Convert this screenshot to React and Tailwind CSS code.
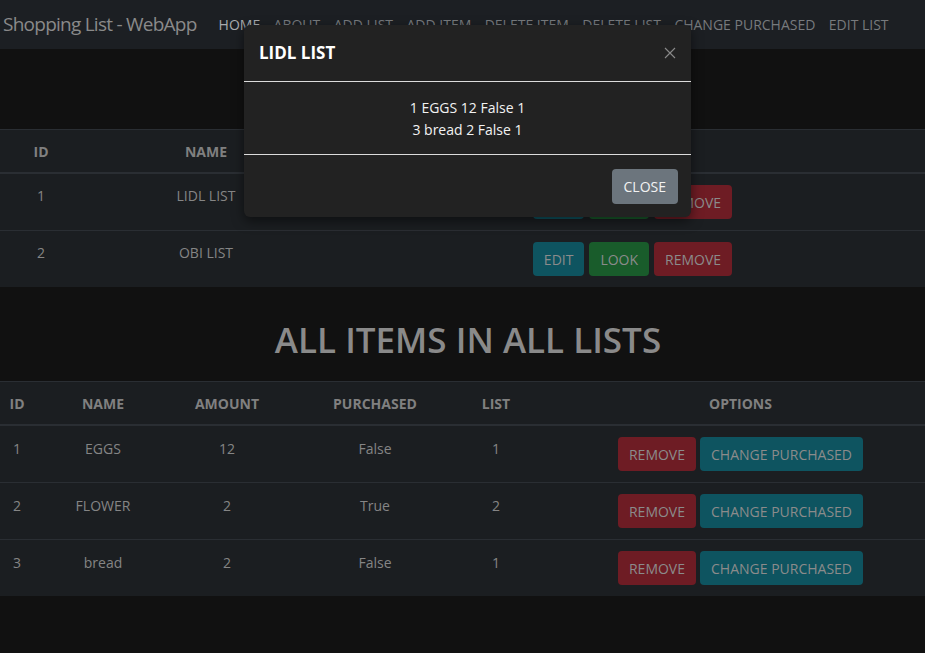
import React from "react";

const font = { fontFamily: '"Open Sans", "Noto Sans", sans-serif' };

function Btn({ color, children }) {
  return (
    <span className={`inline-flex items-center h-[34px] px-[11px] rounded text-[14px] text-[#8b8b8b] ${color}`}>
      {children}
    </span>
  );
}

const lists = [
  { id: 1, name: "LIDL LIST" },
  { id: 2, name: "OBI LIST" },
];

const items = [
  { id: 1, name: "EGGS", amount: 12, purchased: "False", list: 1 },
  { id: 2, name: "FLOWER", amount: 2, purchased: "True", list: 2 },
  { id: 3, name: "bread", amount: 2, purchased: "False", list: 1 },
];

export default function App() {
  return (
    <div className="relative min-h-screen bg-[#111111] text-[14px]" style={font}>
      {/* Navbar */}
      <nav className="h-[49px] bg-[#1c1f23] flex items-center">
        <span className="pl-[3px] text-[19px] tracking-[-0.75px] text-[#8a8a8a] leading-none mr-[14px]">Shopping List - WebApp</span>
        <div className="flex items-center gap-[13.4px] text-[14px] text-[#777a7d] ml-[8px]">
          <span className="text-[#a9abad]">HOME</span>
          <span>ABOUT</span>
          <span>ADD LIST</span>
          <span>ADD ITEM</span>
          <span>DELETE ITEM</span>
          <span>DELETE LIST</span>
          <span>CHANGE PURCHASED</span>
          <span>EDIT LIST</span>
        </div>
      </nav>

      {/* Section 1 heading area (covered by the modal) */}
      <div className="h-[80px]" />

      {/* Lists table */}
      <div className="bg-[#1b1e21] border-t border-[#2a2e33]">
        <div className="grid grid-cols-[82px_248px_1fr] h-[44px] items-center font-bold text-[#808080] border-b-2 border-[#2a2e33]">
          <div className="text-center">ID</div>
          <div className="text-center">NAME</div>
          <div className="text-center pl-[10px]">OPTIONS</div>
        </div>
        {lists.map((l, i) => (
          <div
            key={l.id}
            className={`grid grid-cols-[82px_248px_1fr] pt-[11px] pb-[11px] text-[#858585] ${i > 0 ? "border-t border-[#2a2e33]" : ""}`}
          >
            <div className="text-center leading-[22px]">{l.id}</div>
            <div className="text-center leading-[22px]">{l.name}</div>
            <div className="flex justify-center gap-[5px] pl-[10px]">
              <Btn color="bg-[#0e5460]">EDIT</Btn>
              <Btn color="bg-[#195c2b]">LOOK</Btn>
              <Btn color="bg-[#6e1c24]">REMOVE</Btn>
            </div>
          </div>
        ))}
      </div>

      {/* Section 2 heading */}
      <div className="pt-[31px] pb-[19px] pl-[11px] text-center">
        <h1 className="text-[35px] leading-[44px] font-semibold text-[#8a8a8a]">ALL ITEMS IN ALL LISTS</h1>
      </div>

      {/* Items table */}
      <div className="bg-[#1b1e21] border-t border-[#2a2e33]">
        <div className="grid grid-cols-[34px_138px_110px_186px_56px_1fr] h-[44px] items-center font-bold text-[#808080] border-b-2 border-[#2a2e33]">
          <div className="text-center">ID</div>
          <div className="text-center">NAME</div>
          <div className="text-center">AMOUNT</div>
          <div className="text-center">PURCHASED</div>
          <div className="text-center">LIST</div>
          <div className="text-center pl-[32px]">OPTIONS</div>
        </div>
        {items.map((it, i) => (
          <div
            key={it.id}
            className={`grid grid-cols-[34px_138px_110px_186px_56px_1fr] pt-[11px] pb-[11px] text-[#858585] ${i > 0 ? "border-t border-[#2a2e33]" : ""}`}
          >
            <div className="text-center leading-[22px] pt-px">{it.id}</div>
            <div className="text-center leading-[22px] pt-px">{it.name}</div>
            <div className="text-center leading-[22px] pt-px">{it.amount}</div>
            <div className="text-center leading-[22px] pt-px">{it.purchased}</div>
            <div className="text-center leading-[22px] pt-px">{it.list}</div>
            <div className="flex justify-center gap-[4px] pl-[32px]">
              <Btn color="bg-[#6e1c24]">REMOVE</Btn>
              <Btn color="bg-[#0e5460]">CHANGE PURCHASED</Btn>
            </div>
          </div>
        ))}
      </div>

      {/* Modal */}
      <div className="absolute left-[244px] top-[25px] w-[447px] bg-[#222222] rounded-md shadow-[0_4px_12px_rgba(0,0,0,0.5)]">
        <div className="h-[57px] flex items-center justify-between pl-[15px] pr-[14px] border-b border-[#dcdcdc]">
          <span className="text-[17px] font-bold text-white">LIDL LIST</span>
          <svg width="12" height="12" viewBox="0 0 12 12" className="mr-[1px]">
            <path d="M1 1 L11 11 M11 1 L1 11" stroke="#8a8a8a" strokeWidth="1.1" fill="none" />
          </svg>
        </div>
        <div className="pt-[15px] pb-[13px] text-center text-[14px] leading-[22px] text-[#f2f2f2]">
          <div>1 EGGS 12 False 1</div>
          <div>3 bread 2 False 1</div>
        </div>
        <div className="border-t border-[#dcdcdc] h-[63px] flex items-center justify-end pr-[13px]">
          <span className="inline-flex items-center h-[35px] px-3 rounded bg-[#6c757d] text-[14px] text-[#f2f2f2]">CLOSE</span>
        </div>
      </div>
    </div>
  );
}
